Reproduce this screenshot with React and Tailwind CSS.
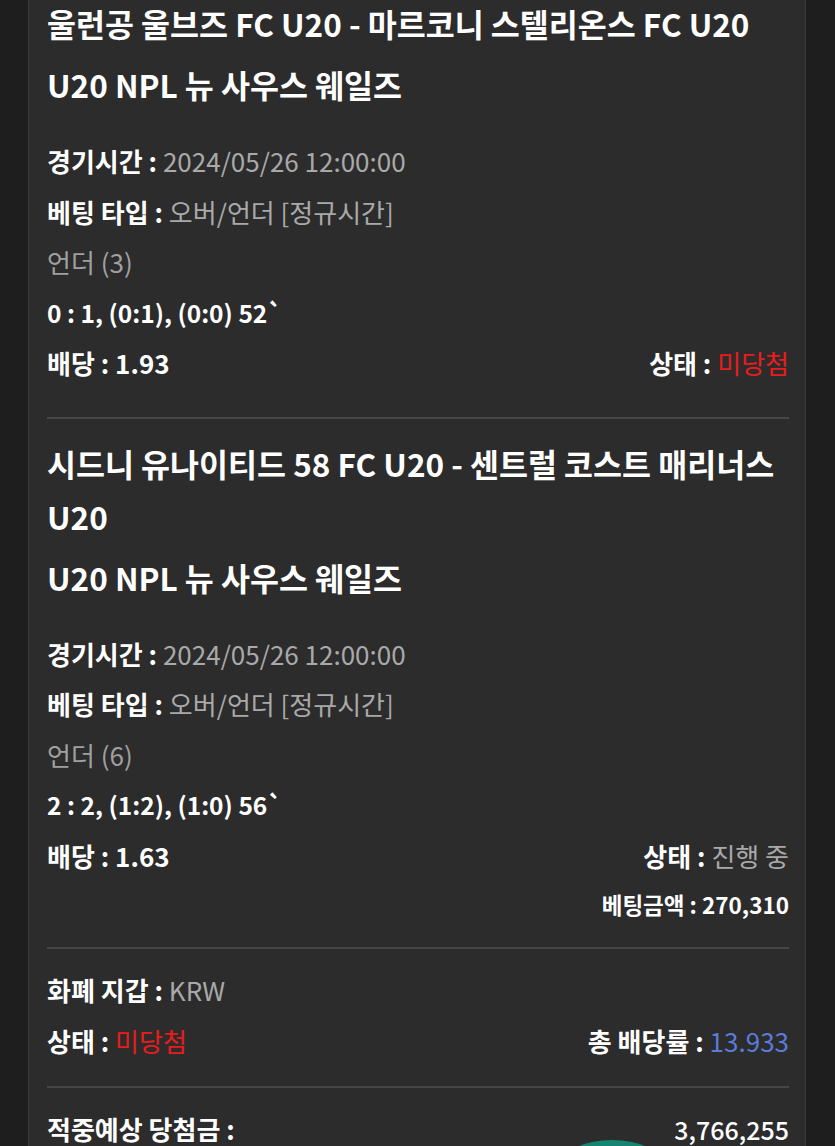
import React from 'react';

const bets = [
  {
    title: ['울런공 울브즈 FC U20 - 마르코니 스텔리온스 FC U20'],
    league: 'U20 NPL 뉴 사우스 웨일즈',
    time: '2024/05/26 12:00:00',
    type: '오버/언더 [정규시간]',
    pick: '언더 (3)',
    score: '0 : 1, (0:1), (0:0) 52`',
    odds: '1.93',
    status: '미당첨',
    lost: true,
  },
  {
    title: ['시드니 유나이티드 58 FC U20 - 센트럴 코스트 매리너스', 'U20'],
    league: 'U20 NPL 뉴 사우스 웨일즈',
    time: '2024/05/26 12:00:00',
    type: '오버/언더 [정규시간]',
    pick: '언더 (6)',
    score: '2 : 2, (1:2), (1:0) 56`',
    odds: '1.63',
    status: '진행 중',
    lost: false,
    amount: '270,310',
  },
];

function Row({ children, className = '' }) {
  return <div className={`flex items-center justify-between leading-[50.5px] ${className}`}>{children}</div>;
}

function Label({ children }) {
  return <span className="font-bold text-white">{children}</span>;
}

function BetCard({ bet, first }) {
  return (
    <div className={first ? 'pb-[28px]' : 'pt-[18px] pb-[20px]'}>
      <div className={first ? '-mt-[3px]' : ''}>
        {bet.title.map((t) => (
          <div key={t} className="text-[31.5px] font-bold leading-[53px] text-white whitespace-nowrap">{t}</div>
        ))}
        <div className="mt-2 text-[31.5px] font-bold leading-[53px] text-white">{bet.league}</div>
      </div>
      <div className="mt-[25px] text-[26px]">
        <Row>
          <span>
            <Label>경기시간 : </Label>
            <span className="text-[#a9a9a9]">{bet.time}</span>
          </span>
        </Row>
        <Row>
          <span>
            <Label>베팅 타입 : </Label>
            <span className="text-[#a9a9a9]">{bet.type}</span>
          </span>
        </Row>
        <Row>
          <span className="text-[#a0a0a0]">{bet.pick}</span>
        </Row>
        <Row>
          <span className="text-[24.5px] font-bold text-white">{bet.score}</span>
        </Row>
        <Row>
          <span>
            <Label>배당 : </Label>
            <span className="font-bold text-white">{bet.odds}</span>
          </span>
          <span>
            <Label>상태 : </Label>
            <span className={bet.lost ? 'text-[#e81c1c]' : 'text-[#a9a9a9]'}>{bet.status}</span>
          </span>
        </Row>
        {bet.amount && (
          <div className="flex justify-end leading-[46px] text-[22.5px] font-bold text-white">
            베팅금액 : {bet.amount}
          </div>
        )}
      </div>
    </div>
  );
}

function Divider() {
  return <div className="h-[2px] bg-[#464646]" />;
}

export default function App() {
  return (
    <div className="h-[1146px] overflow-hidden bg-[#1e1e1e] font-['Noto_Sans_CJK_KR','Noto_Sans',sans-serif]">
      <div className="relative ml-[28px] h-full w-[778px] overflow-hidden border-x border-[#3a3a3a] bg-[#2c2c2c] pl-[18px] pr-[16px]">
        <BetCard bet={bets[0]} first />
        <Divider />
        <BetCard bet={bets[1]} />
        <Divider />
        <div className="pt-[16px] pb-[20px] text-[26px]">
          <Row>
            <span>
              <Label>화폐 지갑 : </Label>
              <span className="text-[#a9a9a9]">KRW</span>
            </span>
          </Row>
          <Row>
            <span>
              <Label>상태 : </Label>
              <span className="text-[#e81c1c]">미당첨</span>
            </span>
            <span>
              <Label>총 배당률 : </Label>
              <span className="text-[#5b7bd9]">13.933</span>
            </span>
          </Row>
        </div>
        <Divider />
        <div className="pt-[16px] text-[26px]">
          <Row>
            <Label>적중예상 당첨금 :</Label>
            <span className="text-[25px] font-medium text-white">3,766,255</span>
          </Row>
        </div>
        <div className="absolute left-[488px] top-[1140px] h-[190px] w-[190px] rounded-full bg-[#138570]" />
      </div>
    </div>
  );
}
